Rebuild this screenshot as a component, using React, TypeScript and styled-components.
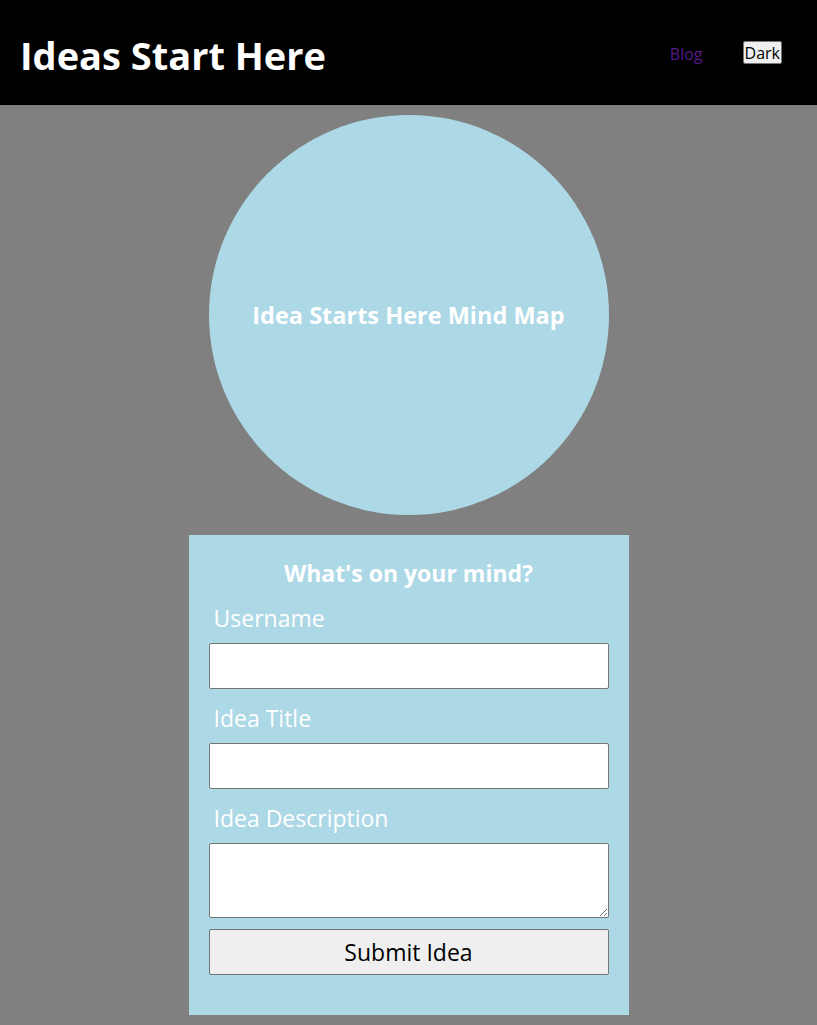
import React from "react";
import styled, { createGlobalStyle } from "styled-components";

const Global = createGlobalStyle`
  html, body { margin: 0; padding: 0; }
  body {
    background: #808080;
    font-family: "Open Sans", "Noto Sans CJK KR", sans-serif;
  }
`;

const Header = styled.header`
  height: 105px;
  background: #000;
  display: flex;
  align-items: center;
  justify-content: space-between;
  padding: 0 35px 0 20px;
  box-sizing: border-box;
`;

const Title = styled.h1`
  margin: 4px 0 0;
  color: #fff;
  font-size: 38px;
  font-weight: 700;
`;

const Nav = styled.nav`
  display: flex;
  align-items: center;
  gap: 40px;
`;

const NavLink = styled.a`
  color: #551a8b;
  font-size: 16px;
  text-decoration: none;
  margin-top: 2px;
`;

const ThemeButton = styled.button`
  font-family: inherit;
  font-size: 16px;
  padding: 0 1px;
  height: 23px;
  background: #efefef;
  color: #000;
  border: 1px solid #767676;
  border-radius: 2px;
`;

const Main = styled.main`
  display: flex;
  flex-direction: column;
  align-items: center;
  padding: 10px 0;
  gap: 20px;
`;

const Circle = styled.div`
  width: 400px;
  height: 400px;
  border-radius: 50%;
  background: #add8e6;
  display: flex;
  align-items: center;
  justify-content: center;
  color: #fff;
  font-size: 23.5px;
  font-weight: 700;
`;

const FormCard = styled.form`
  width: 440px;
  box-sizing: border-box;
  background: #add8e6;
  padding: 22px 20px 40px;
  display: flex;
  flex-direction: column;
`;

const FormHeading = styled.h3`
  margin: 0 0 13px;
  text-align: center;
  color: #fff;
  font-size: 23px;
  font-weight: 700;
`;

const Label = styled.label`
  color: #fff;
  font-size: 23px;
  margin: 0 0 9px 5px;
`;

const Field = styled.input`
  height: 46px;
  box-sizing: border-box;
  border: 1px solid #767676;
  border-radius: 2px;
  background: #fff;
  margin: 0 0 13px;
  font-size: 16px;
`;

const Area = styled.textarea`
  height: 75px;
  box-sizing: border-box;
  border: 1px solid #767676;
  border-radius: 2px;
  background: #fff;
  margin: 0 0 11px;
  font-size: 16px;
`;

const Submit = styled.button`
  height: 46px;
  box-sizing: border-box;
  border: 1px solid #767676;
  border-radius: 2px;
  background: #efefef;
  color: #000;
  font-family: inherit;
  font-size: 23px;
`;

export default function App() {
  return (
    <>
      <Global />
      <Header>
        <Title>Ideas Start Here</Title>
        <Nav>
          <NavLink href="#blog">Blog</NavLink>
          <ThemeButton type="button">Dark</ThemeButton>
        </Nav>
      </Header>
      <Main>
        <Circle>Idea Starts Here Mind Map</Circle>
        <FormCard onSubmit={(e) => e.preventDefault()}>
          <FormHeading>What's on your mind?</FormHeading>
          <Label htmlFor="username">Username</Label>
          <Field id="username" type="text" />
          <Label htmlFor="title">Idea Title</Label>
          <Field id="title" type="text" />
          <Label htmlFor="desc">Idea Description</Label>
          <Area id="desc" />
          <Submit type="submit">Submit Idea</Submit>
        </FormCard>
      </Main>
    </>
  );
}
